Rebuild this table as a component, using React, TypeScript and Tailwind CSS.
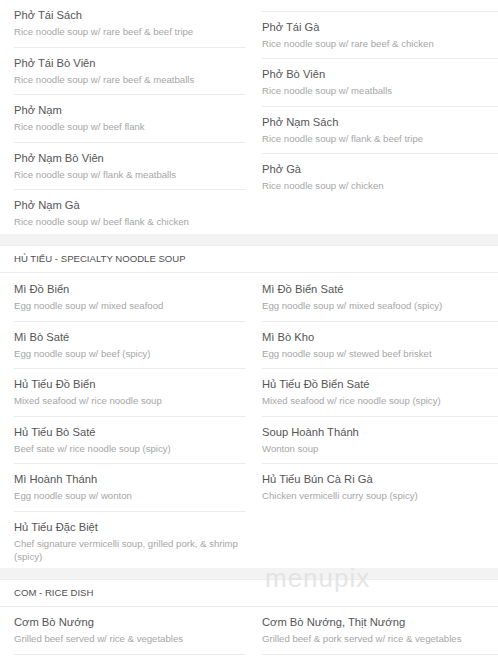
type Dish = { name: string; desc: string };

const phoLeft: Dish[] = [
  { name: "Phở Tái Sách", desc: "Rice noodle soup w/ rare beef & beef tripe" },
  { name: "Phở Tái Bò Viên", desc: "Rice noodle soup w/ rare beef & meatballs" },
  { name: "Phở Nạm", desc: "Rice noodle soup w/ beef flank" },
  { name: "Phở Nạm Bò Viên", desc: "Rice noodle soup w/ flank & meatballs" },
  { name: "Phở Nạm Gà", desc: "Rice noodle soup w/ beef flank & chicken" },
];

const phoRight: Dish[] = [
  { name: "Phở Tái Gà", desc: "Rice noodle soup w/ rare beef & chicken" },
  { name: "Phở Bò Viên", desc: "Rice noodle soup w/ meatballs" },
  { name: "Phở Nạm Sách", desc: "Rice noodle soup w/ flank & beef tripe" },
  { name: "Phở Gà", desc: "Rice noodle soup w/ chicken" },
];

const huTieuLeft: Dish[] = [
  { name: "Mì Đồ Biển", desc: "Egg noodle soup w/ mixed seafood" },
  { name: "Mì Bò Saté", desc: "Egg noodle soup w/ beef (spicy)" },
  { name: "Hủ Tiếu Đồ Biển", desc: "Mixed seafood w/ rice noodle soup" },
  { name: "Hủ Tiếu Bò Saté", desc: "Beef sate w/ rice noodle soup (spicy)" },
  { name: "Mì Hoành Thánh", desc: "Egg noodle soup w/ wonton" },
  { name: "Hủ Tiếu Đặc Biệt", desc: "Chef signature vermicelli soup, grilled pork, & shrimp (spicy)" },
];

const huTieuRight: Dish[] = [
  { name: "Mì Đồ Biển Saté", desc: "Egg noodle soup w/ mixed seafood (spicy)" },
  { name: "Mì Bò Kho", desc: "Egg noodle soup w/ stewed beef brisket" },
  { name: "Hủ Tiếu Đồ Biển Saté", desc: "Mixed seafood w/ rice noodle soup (spicy)" },
  { name: "Soup Hoành Thánh", desc: "Wonton soup" },
  { name: "Hủ Tiếu Bún Cà Ri Gà", desc: "Chicken vermicelli curry soup (spicy)" },
];

function Item({ dish, last }: { dish: Dish; last?: boolean }) {
  return (
    <div
      className={
        "pt-[8px] " + (last ? "pb-[8px]" : "min-h-[47.5px] pb-[8px] border-b border-[#ececec]")
      }
    >
      <p className="text-[11.2px] leading-[14px] text-[#555]">{dish.name}</p>
      <p className="mt-[3px] text-[9.6px] leading-[13px] text-[#a6a6a6]">{dish.desc}</p>
    </div>
  );
}

function Column({ dishes, children }: { dishes: Dish[]; children?: React.ReactNode }) {
  return (
    <div className="flex flex-col pl-[14px]">
      {children}
      {dishes.map((d, i) => (
        <Item key={d.name} dish={d} last={i === dishes.length - 1} />
      ))}
    </div>
  );
}

function Header({ title }: { title: string }) {
  return (
    <div className="flex h-[27px] items-center border-b border-[#ececec] pl-[14px] text-[9.6px] text-[#505050]">
      {title}
    </div>
  );
}

function Band() {
  return <div className="h-[12px] bg-[#f3f3f3] border-b border-[#ececec]" />;
}

export default function App() {
  return (
    <div
      className="relative w-[498px] h-[659px] overflow-hidden bg-white"
      style={{ fontFamily: '"Liberation Sans", Arial, sans-serif' }}
    >
      <div className="grid h-[234px] grid-cols-[248px_1fr]">
        <div className="pr-[2px]">
          <Column dishes={phoLeft} />
        </div>
        <Column dishes={phoRight}>
          <div className="h-[11.5px] border-b border-[#ececec]" />
        </Column>
      </div>

      <Band />
      <Header title="HỦ TIẾU - SPECIALTY NOODLE SOUP" />
      <div className="grid h-[295px] grid-cols-[248px_1fr] pt-[1px]">
        <div className="pr-[2px]">
          <Column dishes={huTieuLeft} />
        </div>
        <Column dishes={huTieuRight} />
      </div>

      <Band />
      <Header title="COM - RICE DISH" />
      <div className="grid grid-cols-[248px_1fr]">
        <div className="pr-[2px]">
          <div className="pl-[14px]">
            <Item dish={{ name: "Cơm Bò Nướng", desc: "Grilled beef served w/ rice & vegetables" }} />
          </div>
        </div>
        <div className="pl-[14px]">
          <Item
            dish={{ name: "Cơm Bò Nướng, Thịt Nướng", desc: "Grilled beef & pork served w/ rice & vegetables" }}
          />
        </div>
      </div>

      <div className="absolute left-[265px] top-[559px] text-[26px] font-light tracking-[1px] text-[#e0e0e0] opacity-80">
        menupix
      </div>
    </div>
  );
}
